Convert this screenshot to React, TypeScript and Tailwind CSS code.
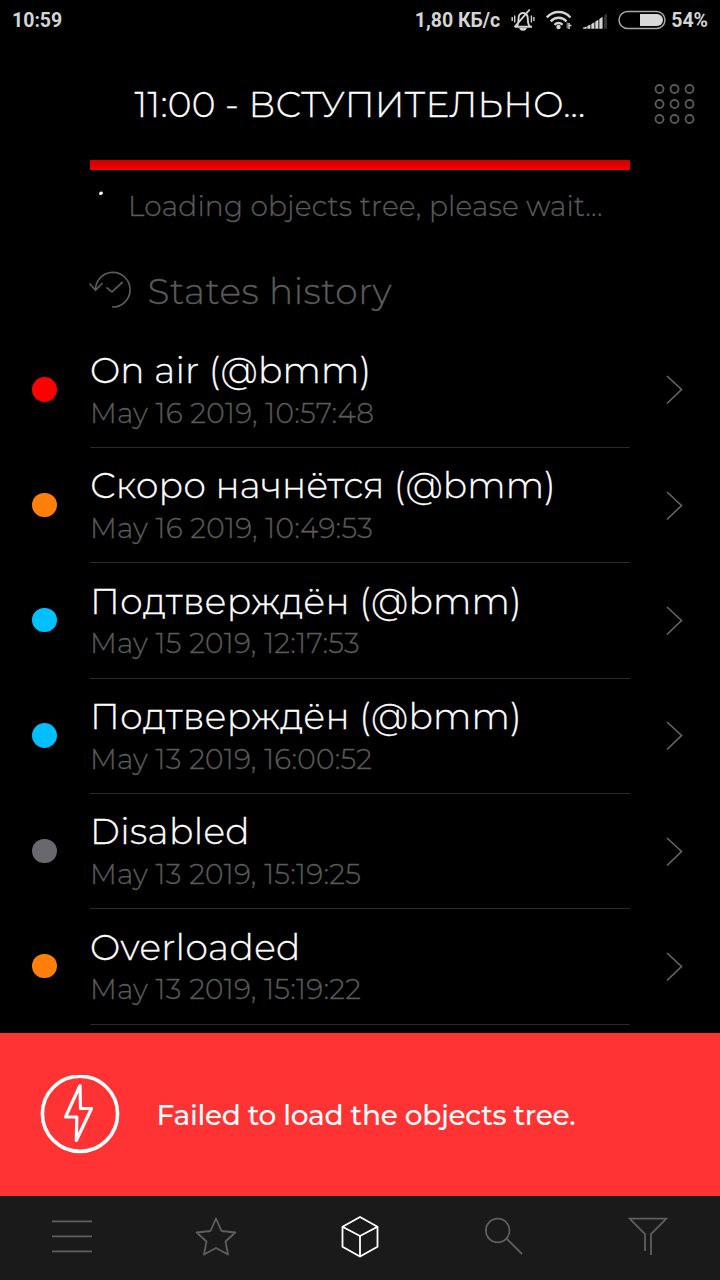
import type { ReactNode } from "react";

type StateItem = {
    title: string;
    date: string;
    dot: string;
    tracking: string;
}

const states: StateItem[] = [
    { title: "On air (@bmm)", date: "May 16 2019, 10:57:48", dot: "bg-[#ff0000]", tracking: "tracking-[0.2px]" },
    { title: "Скоро начнётся (@bmm)", date: "May 16 2019, 10:49:53", dot: "bg-[#ff7f0a]", tracking: "tracking-[0.12px]" },
    { title: "Подтверждён (@bmm)", date: "May 15 2019, 12:17:53", dot: "bg-[#00bfff]", tracking: "tracking-[0.2px]" },
    { title: "Подтверждён (@bmm)", date: "May 13 2019, 16:00:52", dot: "bg-[#00bfff]", tracking: "tracking-[0.2px]" },
    { title: "Disabled", date: "May 13 2019, 15:19:25", dot: "bg-[#69696d]", tracking: "tracking-[0.4px]" },
    { title: "Overloaded", date: "May 13 2019, 15:19:22", dot: "bg-[#ff7f0a]", tracking: "tracking-[0.4px]" },
];

export default function App() {
    return <div className="flex h-[1280px] w-[720px] flex-col overflow-hidden bg-black font-['Montserrat','Inter',sans-serif] font-light text-white">
        <StatusBar />
        <Header />
        <main className="min-h-0 flex-1 overflow-hidden [-webkit-text-stroke:0.3px]">
            <div className="mx-[90px] h-[10px] bg-linear-to-b from-[#c80000] to-[#f80000]"></div>
            <div className="mt-[17px] flex h-[38px] pl-[90px] text-[28px] leading-[38px] tracking-[0.18px] text-[#5a5a5a]">
                <Spinner />
                <div className="whitespace-nowrap">Loading objects tree, please wait...</div>
            </div>
            <div className="mt-[45px] flex h-[42px] pl-[88px] text-[36px] leading-[42px] tracking-[0.48px] text-[#5a5a5a]">
                <HistoryIcon />
                <div className="ml-[15.5px] whitespace-nowrap">States history</div>
            </div>
            <div className="mt-[20.6px]">
                {states.map((item, i) => <StateRow key={i} item={item} />)}
            </div>
        </main>
        <div className="flex h-[163px] shrink-0 items-center bg-[#ff3333] pl-10">
            <BoltIcon />
            <div className="ml-[36.5px] whitespace-nowrap text-[28px] font-medium leading-[38px] tracking-[-0.3px]">Failed to load the objects tree.</div>
        </div>
        <NavBar />
    </div>
}

function StatusBar() {
    return <div className="flex h-10 shrink-0 items-center pl-3 pr-[12px] font-[Roboto,sans-serif] text-[19.5px] leading-6 font-bold text-[#d4d4d4]">
        <div className="pt-px">10:59</div>
        <div className="ml-auto pt-px">1,80 КБ/с</div>
        <svg className="ml-[11px]" width="24" height="24" viewBox="0 0 24 24" fill="none" stroke="currentColor" strokeWidth="1.900">
            <path d="M4 18.800h17M5.500 18.500c1.500-1.500 2-3 2-7.500 0-3.800 1.500-6 4.500-6s4.800 2.200 4.800 6c0 4.500.5 6 2.200 7.500M18.700 1.500 3.500 19.200" />
            <path d="M9.300 20.800c1 1.600 4.400 1.600 5.400 0zM3.700 7.500v7M1.200 9v4M20.400 7.500v7M22.900 9v4" strokeWidth="1.400" />
        </svg>
        <svg className="ml-[11px]" width="26" height="24" viewBox="0 0 26 24" fill="none" stroke="currentColor" strokeWidth="2.400">
            <path d="M.8 9.500c6.600-7.300 17.200-7.300 23.600 0M4.700 13.300c4.500-4.700 11.300-4.700 15.800 0M8.500 16.800c2.400-2.400 5.800-2.400 8 0" />
            <circle cx="12.500" cy="19" r="2.200" fill="currentColor" stroke="none" />
            <path d="M21.300 14.500v6" stroke="#777" strokeWidth="1.500" />
            <path d="M23 15v6M23 17.500h2.500" strokeWidth="1.500" />
        </svg>
        <svg className="ml-[11px]" width="25" height="24" viewBox="0 0 25 24" fill="currentColor">
            <path d="M0 20.800v-1l3.700-1.200v2.200zM4.300 18l3.100-1.400v4.200H4.300zM8.300 16l3.100-1.700v6.500H8.300zM12.300 13.600l3.100-1.800v9h-3.100zM16.300 11l3.300-2.200v12h-3.300z" />
            <path d="M21 7.500l3-2v15.300h-3z" fill="#333" />
        </svg>
        <svg className="ml-[10px]" width="48" height="20" viewBox="0 0 48 20" fill="none" stroke="#a8a8a8" strokeWidth="1.500">
            <rect x="1" y="1.500" width="46" height="17" rx="8.500" />
            <path d="M22 4h17a6 6 0 0 1 0 12H22z" fill="#d8d8d8" stroke="none" />
        </svg>
        <div className="ml-[5px] pt-px">54%</div>
    </div>
}

function Header() {
    return <header className="flex h-[120px] shrink-0 items-center pl-[90px]">
        <div className="mt-2 w-[540px] whitespace-nowrap text-center text-[36px] leading-[42px] tracking-[0.2px] [-webkit-text-stroke:0.3px]">11:00 - ВСТУПИТЕЛЬНО...</div>
        <svg className="ml-6 mt-2" width="42" height="42" viewBox="0 0 42 42" fill="none" stroke="#5a5a5a" strokeWidth="1.800">
            {[6, 21, 36].map(y => [5.5, 20.5, 35.5].map(x => <circle key={`${x}-${y}`} cx={x} cy={y} r="4" />))}
        </svg>
    </header>
}

function Spinner() {
    return <svg className="mr-[6px] shrink-0" width="32" height="38" viewBox="0 0 32 38">
        <ellipse cx="11" cy="6.300" rx="2" ry="1.600" fill="white" transform="rotate(-25 11 6.300)" />
    </svg>
}

function HistoryIcon() {
    return <svg className="shrink-0" width="44" height="42" viewBox="0 0 44 42" fill="none" stroke="#5a5a5a" strokeWidth="1.700">
        <path d="M7.500 20.500A17.300 17.300 0 1 1 24 37M1.500 13.500 7.500 20.300 14.500 13M18.500 17.500l5.500 4.300L34.700 12" />
    </svg>
}

function StateRow({ item }: { item: StateItem }) {
    return <div className="flex h-[115.33px] items-center">
        <div className="flex w-[90px] pb-[1.5px] pl-8">
            <div className={`size-[24.5px] rounded-full ${item.dot}`}></div>
        </div>
        <div className="h-full w-[540px] whitespace-nowrap border-b border-[#2a2a2a] pt-[16.5px]">
            <div className={`text-[36px] leading-[42px] ${item.tracking}`}>{item.title}</div>
            <div className="mt-[2.5px] text-[28px] leading-[38px] tracking-[0.28px] text-[#5a5a5a]">{item.date}</div>
        </div>
        <svg className="ml-9" width="18" height="30" viewBox="0 0 18 30" fill="none" stroke="#666" strokeWidth="1.600">
            <path d="M1 1 15.500 14.500 1 28.500" />
        </svg>
    </div>
}

function BoltIcon() {
    return <svg className="shrink-0" width="80" height="80" viewBox="0 0 80 80" fill="none" stroke="white" strokeWidth="3.600">
        <circle cx="40" cy="38.800" r="37.600" />
        <path d="M40 10.500 25.500 42H36.800L36.300 65.500 51.500 33.500H40.500z" strokeWidth="3.200" strokeLinejoin="round" />
    </svg>
}

function NavBar() {
    return <nav className="grid h-[84px] shrink-0 grid-cols-5 bg-[#1a1a1a]">
        <NavItem><path d="M4 7.300h40M4 22.300h40M4 37.300h40" /></NavItem>
        <NavItem><path d="M24 4.500 29.500 17 43.300 18.500 33.500 27.500 36 40.500 24 34 12 40.500 14.500 27.500 4.700 18.500 18.500 17z" strokeLinejoin="round" /></NavItem>
        <NavItem active><path d="M24 3 41.500 12.700V32.700L24 42.500 6.500 32.700V12.700zM6.500 12.700 24 22 41.500 12.700M24 22v20.500" strokeLinejoin="round" /></NavItem>
        <NavItem><path d="M26.500 24.500 42 40M29.500 16.500a11.800 11.800 0 1 1-23.600 0a11.800 11.800 0 0 1 23.600 0" /></NavItem>
        <NavItem><path d="M21 37V20L5.700 4.700H42.300L27 20V41" /></NavItem>
    </nav>
}

function NavItem({ active, children }: { active?: boolean, children: ReactNode }) {
    return <div className={`flex items-center justify-center ${active ? "text-white" : "text-[#5f5f5f]"}`}>
        <svg width="48" height="48" viewBox="0 0 48 48" fill="none" stroke="currentColor" strokeWidth="1.800">{children}</svg>
    </div>
}
